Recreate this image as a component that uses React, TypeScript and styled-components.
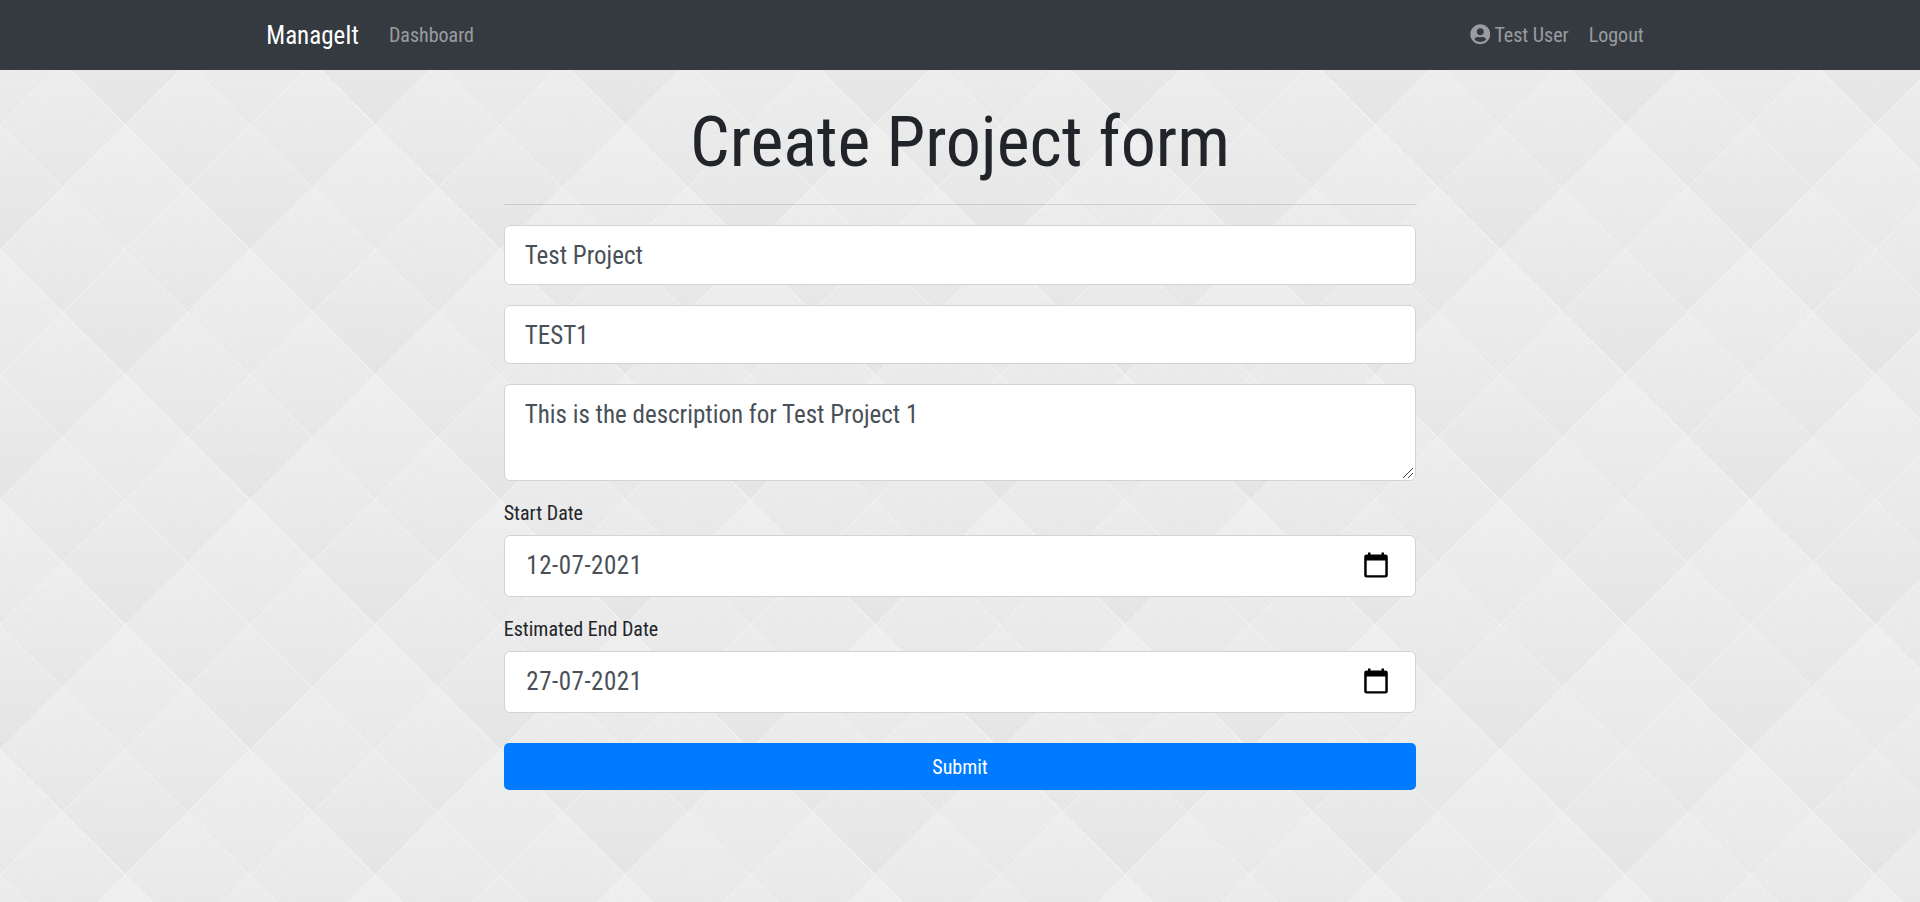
import React from "react";
import styled, { createGlobalStyle } from "styled-components";
import { FaUserCircle } from "react-icons/fa";

const GlobalStyle = createGlobalStyle`
  *, *::before, *::after { box-sizing: border-box; }
  html { font-size: 20px; }
  body {
    margin: 0;
    min-height: 100vh;
    overflow: hidden;
    background: #e9e9e9;
    color: #212529;
    font-family: "Roboto Condensed", Roboto, "Liberation Sans", sans-serif;
    font-stretch: 75%;
    font-size: 20px;
    font-weight: 400;
    line-height: 1.5;
  }
`;

const Page = styled.div`
  position: relative;
  isolation: isolate;
  height: 100vh;
`;

const Backdrop = styled.svg`
  position: absolute;
  inset: 0;
  z-index: -1;
  width: 100%;
  height: 100%;
`;

const Navbar = styled.nav`
  height: 70px;
  background: #343a40;
`;

const NavInner = styled.div`
  display: flex;
  align-items: center;
  width: 1425px;
  height: 100%;
  margin: 0 auto;
  padding: 0 18.75px;
`;

const Brand = styled.a`
  margin-right: 20px;
  padding-top: 2px;
  color: #fff;
  font-size: 25px;
  text-decoration: none;
`;

const NavLinks = styled.div<{ $end?: boolean }>`
  display: flex;
  margin-left: ${(p) => (p.$end ? "auto" : "0")};
`;

const NavLink = styled.a`
  display: flex;
  align-items: center;
  gap: 4.2px;
  padding: 0 10px;
  color: rgba(255, 255, 255, 0.5);
  text-decoration: none;
  white-space: nowrap;
`;

const UserIcon = styled(FaUserCircle)`
  width: 20.6px;
  height: 20.6px;
  margin-bottom: 1.4px;
`;

const FormColumn = styled.main`
  width: 912.5px;
  margin: 30px auto 0;
`;

const Title = styled.h1`
  margin: 0;
  font-size: 70px;
  font-weight: 400;
  line-height: 84px;
  text-align: center;
`;

const Rule = styled.hr`
  height: 1px;
  margin: 20px 0;
  border: 0;
  background: rgba(0, 0, 0, 0.12);
`;

const Form = styled.form`
  display: flex;
  flex-direction: column;
`;

const controlStyles = `
  display: block;
  width: 100%;
  border: 1px solid #ced4da;
  border-radius: 6px;
  background: #fff;
  color: #495057;
  font: inherit;
  font-size: 25px;
  line-height: 37.5px;
  outline: none;
`;

const TextInput = styled.input<{ $height: number; $top: number }>`
  ${controlStyles}
  height: ${(p) => p.$height}px;
  margin-bottom: 20px;
  padding: ${(p) => p.$top}px 20px ${(p) => 20 - p.$top}px;
`;

const TextAreaWrap = styled.div`
  position: relative;
  height: 97px;
`;

const TextArea = styled.textarea`
  ${controlStyles}
  height: 97px;
  padding: 11px 20px 9px;
  overflow: hidden;
  resize: none;
`;

const ResizeGrip = styled.svg`
  position: absolute;
  right: 3px;
  bottom: 3px;
  pointer-events: none;
`;

const Label = styled.label`
  padding: 17px 0 7px;
  line-height: 30px;
`;

const DateBox = styled.div`
  ${controlStyles}
  display: flex;
  align-items: center;
  justify-content: space-between;
  height: 62px;
  padding: 0 26px 0 21.6px;
`;

const DateText = styled.span`
  letter-spacing: 0.5px;
`;

const Calendar = styled.svg`
  margin-bottom: 2px;
`;

const SubmitButton = styled.button`
  height: 47px;
  margin-top: 30px;
  padding: 0;
  border: 0;
  border-radius: 5px;
  background: #007bff;
  color: #fff;
  font: inherit;
`;

const CalendarIcon = () => (
  <Calendar width="26" height="28" viewBox="0 0 26 28" aria-hidden="true">
    <path
      fillRule="evenodd"
      d="M5 1.500h2.500v2h11v-2H21v2h1.500a2.300 2.300 0 0 1 2.300 2.300V24.200a2.300 2.300 0 0 1-2.300 2.300h-19a2.300 2.300 0 0 1-2.300-2.300V5.800a2.300 2.300 0 0 1 2.300-2.300H5zM3.700 9.500v14.700h18.600V9.500z"
    />
  </Calendar>
);

const diamond = (cx: number, top: number, r: number) =>
  `M${cx} ${top}L${cx + r} ${top + r}L${cx} ${top + 2 * r}L${cx - r} ${top + r}Z`;

const largeDiamonds = [
  [125, -125], [0, 0], [250, 0], [125, 125],
  [0, -250], [250, -250], [0, 250], [250, 250],
];

const smallDiamonds: number[][] = [];
for (let row = -2; row <= 4; row++) {
  for (let col = 0; col <= 4; col++) {
    if ((row + col) % 2 === 0) smallDiamonds.push([col * 62.5, row * 62.5]);
  }
}

const DiamondBackdrop = () => (
  <Backdrop aria-hidden="true">
    <defs>
      <linearGradient id="large" x1="0" y1="0" x2="0" y2="1">
        <stop offset="0" stopColor="#efeeee" />
        <stop offset="0.5" stopColor="#ebebeb" />
        <stop offset="1" stopColor="#e7e7e7" />
      </linearGradient>
      <linearGradient id="small" x1="0" y1="0" x2="0" y2="1">
        <stop offset="0" stopColor="#fff" stopOpacity="0.13" />
        <stop offset="0.5" stopColor="#fff" stopOpacity="0" />
        <stop offset="0.5" stopColor="#000" stopOpacity="0" />
        <stop offset="1" stopColor="#000" stopOpacity="0.009" />
      </linearGradient>
      <filter id="grain" x="0" y="0" width="100%" height="100%">
        <feTurbulence type="fractalNoise" baseFrequency="0.35" numOctaves="2" />
        <feColorMatrix values="0 0 0 0 0.5  0 0 0 0 0.5  0 0 0 0 0.5  0.5 0 0 0 -0.2" />
      </filter>
      <pattern id="tile" width="250" height="250" patternUnits="userSpaceOnUse">
        <rect width="250" height="250" fill="#ebebeb" />
        {largeDiamonds.map(([x, y]) => (
          <path key={`${x},${y}`} d={diamond(x, y, 125)} fill="url(#large)" />
        ))}
        {smallDiamonds.map(([x, y]) => (
          <path key={`${x},${y}`} d={diamond(x, y, 62.5)} fill="url(#small)" />
        ))}
        <path
          d="M0 125L125 250M125 0L250 125M0 125L125 0M125 250L250 125M0 0L250 250M250 0L0 250"
          stroke="#f4f2f2"
          strokeWidth="1"
          fill="none"
        />
        <path d="M0 0L250 250" stroke="#f4f2f2" strokeWidth="1.4" />
      </pattern>
    </defs>
    <rect width="100%" height="100%" fill="url(#tile)" />
    <rect width="100%" height="100%" filter="url(#grain)" opacity="0.2" />
  </Backdrop>
);

const DateField = ({ label, value }: { label: string; value: string }) => (
  <>
    <Label>{label}</Label>
    <DateBox>
      <DateText>{value}</DateText>
      <CalendarIcon />
    </DateBox>
  </>
);

export default function App() {
  return (
    <Page>
      <GlobalStyle />
      <DiamondBackdrop />
      <Navbar>
        <NavInner>
          <Brand>ManageIt</Brand>
          <NavLinks>
            <NavLink>Dashboard</NavLink>
          </NavLinks>
          <NavLinks $end>
            <NavLink>
              <UserIcon />
              Test User
            </NavLink>
            <NavLink>Logout</NavLink>
          </NavLinks>
        </NavInner>
      </Navbar>
      <FormColumn>
        <Title>Create Project form</Title>
        <Rule />
        <Form>
          <TextInput $height={60} $top={10} defaultValue="Test Project" />
          <TextInput $height={59} $top={11} defaultValue="TEST1" />
          <TextAreaWrap>
            <TextArea defaultValue="This is the description for Test Project 1" />
            <ResizeGrip width="10" height="10" viewBox="0 0 10 10" aria-hidden="true">
              <path d="M0 10L10 0M5 10L10 5" stroke="#444" strokeWidth="1" />
            </ResizeGrip>
          </TextAreaWrap>
          <DateField label="Start Date" value="12-07-2021" />
          <DateField label="Estimated End Date" value="27-07-2021" />
          <SubmitButton type="button">Submit</SubmitButton>
        </Form>
      </FormColumn>
    </Page>
  );
}
